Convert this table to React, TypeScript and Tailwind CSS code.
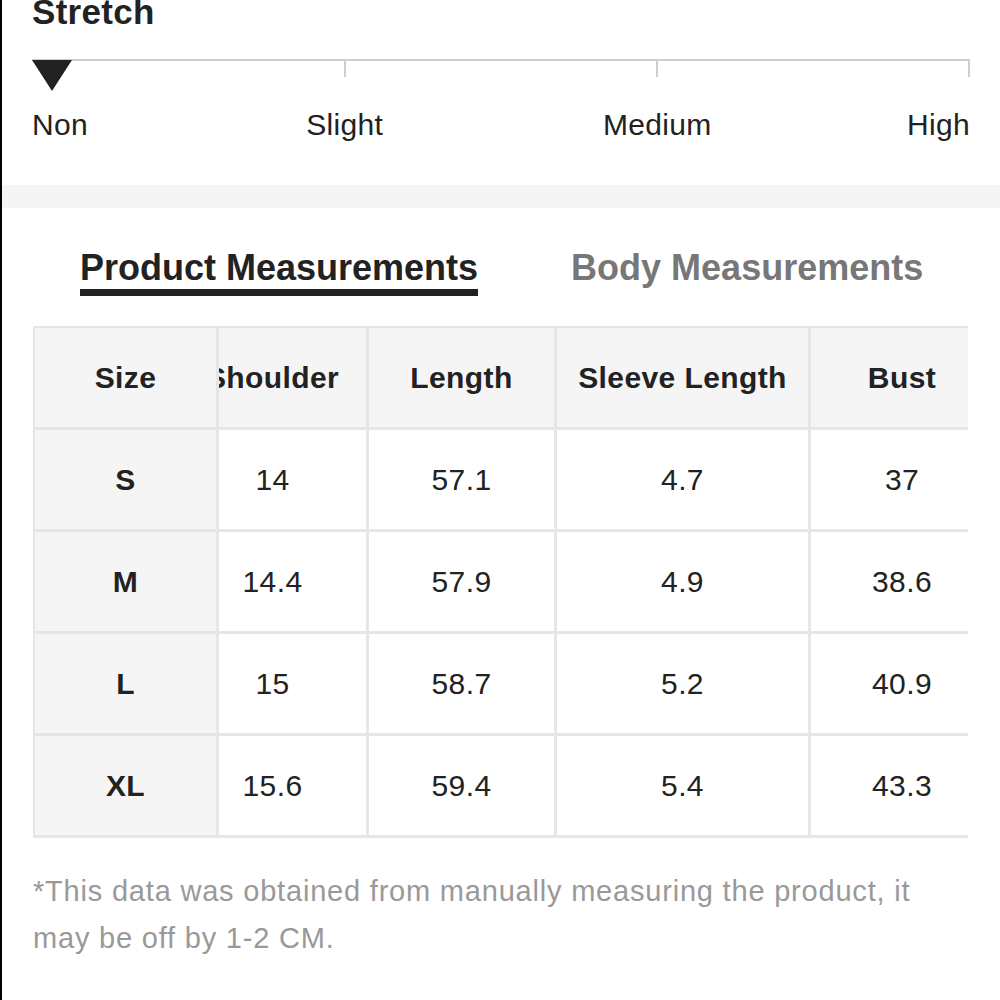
const heads = ["Size", "Shoulder", "Length", "Sleeve Length", "Bust"];

const rows = [
  ["S", "14", "57.1", "4.7", "37"],
  ["M", "14.4", "57.9", "4.9", "38.6"],
  ["L", "15", "58.7", "5.2", "40.9"],
  ["XL", "15.6", "59.4", "5.4", "43.3"],
];

// per-column cell box; shoulder content sits off-centre like the source
const COL = [
  "w-[184px] justify-center",
  "w-[150px] justify-center pr-[40px]",
  "w-[188px] justify-center",
  "w-[254px] justify-center",
  "w-[185px] justify-center",
];

function StretchScale() {
  return (
    <div className="px-[30px]">
      <div className="relative mt-[27px] h-[16px] border-t-2 border-[#cfcfcf]">
        <div className="absolute left-[calc(33.333%-1px)] top-0 h-[16px] w-[2px] bg-[#cfcfcf]" />
        <div className="absolute left-[calc(66.666%-1px)] top-0 h-[16px] w-[2px] bg-[#cfcfcf]" />
        <div className="absolute right-0 top-0 h-[16px] w-[2px] bg-[#cfcfcf]" />
        <svg viewBox="0 0 40 31" className="absolute -top-[1px] left-0 h-[31px] w-[40px]" aria-hidden>
          <polygon points="0,0 40,0 20,31" fill="#222" />
        </svg>
      </div>
      <div className="relative mt-[32px] h-[36px] text-[30px] leading-[36px] tracking-[0.3px] text-[#222]">
        <span className="absolute left-0">Non</span>
        <span className="absolute left-[33.333%] -translate-x-1/2">Slight</span>
        <span className="absolute left-[66.666%] -translate-x-1/2">Medium</span>
        <span className="absolute right-0">High</span>
      </div>
    </div>
  );
}

export default function App() {
  return (
    <div
      className="min-h-[1000px] w-[1000px] border-l-2 border-black bg-white"
      style={{ fontFamily: '"Liberation Sans", Arial, sans-serif' }}
    >
      <div className="h-[185px] overflow-hidden">
        <h2 className="-mt-[8px] px-[30px] text-[35px] font-bold leading-[40px] tracking-[0.3px] text-[#222]">
          Stretch
        </h2>
        <StretchScale />
      </div>
      <div className="h-[23px] bg-[#f5f5f5]" />

      <div className="flex items-start pl-[78px] pt-[36px] text-[36px] font-bold leading-[48px]">
        <div className="flex flex-col">
          <span className="text-[#222]">Product Measurements</span>
          <span className="-mt-[3px] h-[7px] bg-[#222]" />
        </div>
        <span className="ml-[93px] text-[#777]">Body Measurements</span>
      </div>

      <div className="ml-[31px] mt-[30px] w-[935px] overflow-hidden">
        <div className="flex w-max flex-col border-l-2 border-t-2 border-[#e6e6e6] text-[30px] tracking-[0.4px] text-[#222]">
          <div className="flex bg-[#f5f5f5] font-bold">
            {heads.map((h, i) => (
              <div
                key={h}
                className={`flex h-[102px] shrink-0 items-center overflow-hidden whitespace-nowrap border-b-[3px] border-r-[3px] border-[#e6e6e6] ${COL[i]}`}
              >
                {h}
              </div>
            ))}
          </div>
          {rows.map((r) => (
            <div key={r[0]} className="flex">
              {r.map((v, i) => (
                <div
                  key={i}
                  className={`flex h-[102px] shrink-0 items-center overflow-hidden whitespace-nowrap border-b-[3px] border-r-[3px] border-[#e6e6e6] ${COL[i]} ${i === 0 ? "bg-[#f5f5f5] font-bold" : "bg-white"}`}
                >
                  {v}
                </div>
              ))}
            </div>
          ))}
        </div>
      </div>

      <p className="mt-[30px] w-[940px] pl-[31px] text-[29px] leading-[47px] tracking-[0.8px] text-[#999]">
        *This data was obtained from manually measuring the product, it may be off by 1-2 CM.
      </p>
    </div>
  );
}
